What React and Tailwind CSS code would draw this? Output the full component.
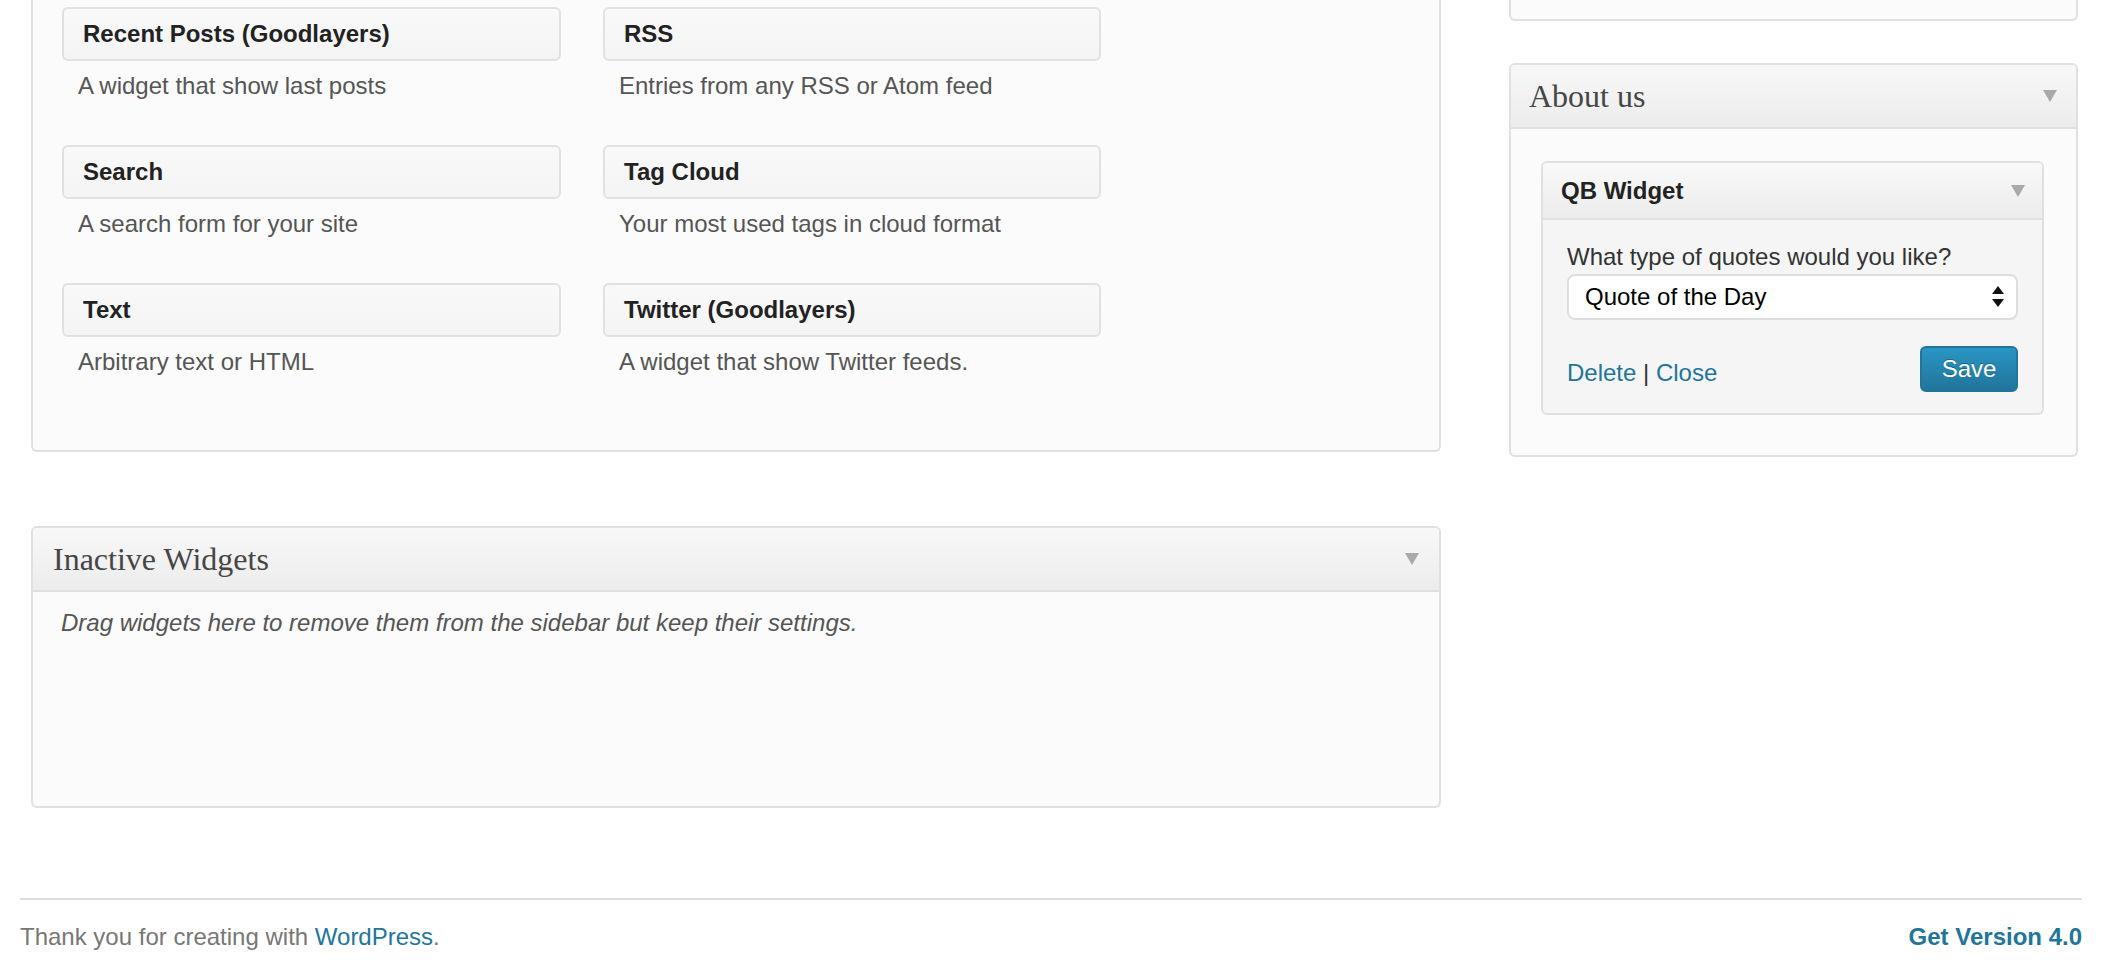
import React from 'react';

const AVAILABLE = [
  { title: 'Recent Posts (Goodlayers)', desc: 'A widget that show last posts' },
  { title: 'RSS', desc: 'Entries from any RSS or Atom feed' },
  { title: 'Search', desc: 'A search form for your site' },
  { title: 'Tag Cloud', desc: 'Your most used tags in cloud format' },
  { title: 'Text', desc: 'Arbitrary text or HTML' },
  { title: 'Twitter (Goodlayers)', desc: 'A widget that show Twitter feeds.' },
];

const DownArrow = () => (
  <svg width="14" height="12" viewBox="0 0 14 12" className="shrink-0">
    <polygon points="0,0 14,0 7,12" fill="#a9a9a9" />
  </svg>
);

const SelectArrows = () => (
  <svg width="12" height="22" viewBox="0 0 12 22" className="shrink-0">
    <polygon points="6,0 12,8 0,8" fill="#111" />
    <polygon points="0,13 12,13 6,21" fill="#111" />
  </svg>
);

const App = () => {
  return (
    <div className="min-h-screen bg-white font-['Liberation_Sans',Arial,sans-serif] text-[24px]">
      <div className="flex pl-[31px] gap-[68px]">
        {/* Left column */}
        <div className="w-[1410px] flex flex-col gap-[74px]">
          {/* Available widgets */}
          <div className="border-2 border-t-0 border-[#e0e0e0] rounded-b-[6px] bg-[#fbfbfb] pt-[7px] pb-[73px] pl-[29px]">
            <div className="grid grid-cols-[499px_498px] gap-x-[42px] gap-y-[44px]">
              {AVAILABLE.map((w) => (
                <div key={w.title}>
                  <div className="h-[54px] flex items-center pl-[19px] border-2 border-[#e1e1e1] rounded-[6px] bg-gradient-to-b from-[#f9f9f9] to-[#f4f4f4] font-bold text-[#222] leading-[30px]">
                    {w.title}
                  </div>
                  <p className="mt-[10px] pl-[16px] leading-[30px] text-[#555]">{w.desc}</p>
                </div>
              ))}
            </div>
          </div>

          {/* Inactive widgets */}
          <div className="h-[282px] border-2 border-[#e0e0e0] rounded-[6px] bg-[#fbfbfb] overflow-hidden">
            <div className="h-[64px] flex items-center justify-between pl-[20px] pr-[20px] border-b-2 border-[#e0e0e0] bg-gradient-to-b from-[#f8f8f8] to-[#ececec]">
              <h3 className="font-['Liberation_Serif',Georgia,serif] text-[32px] leading-none text-[#464646]">Inactive Widgets</h3>
              <DownArrow />
            </div>
            <p className="pt-[16px] pl-[28px] italic leading-[30px] text-[#555]">
              Drag widgets here to remove them from the sidebar but keep their settings.
            </p>
          </div>
        </div>

        {/* Right column */}
        <div className="w-[569px] flex flex-col gap-[42px]">
          <div className="h-[21px] border-2 border-t-0 border-[#e0e0e0] rounded-b-[6px] bg-[#fbfbfb]" />

          <div className="border-2 border-[#e0e0e0] rounded-[6px] bg-[#fbfbfb] overflow-hidden">
            <div className="h-[64px] flex items-center justify-between pl-[18px] pr-[19px] border-b-2 border-[#e0e0e0] bg-gradient-to-b from-[#f8f8f8] to-[#ececec]">
              <h3 className="font-['Liberation_Serif',Georgia,serif] text-[32px] leading-none text-[#464646]">About us</h3>
              <DownArrow />
            </div>

            <div className="ml-[30px] mr-[32px] mt-[32px] mb-[40px] border-2 border-[#e0e0e0] rounded-[6px] bg-[#f5f5f5] overflow-hidden">
              <div className="h-[57px] flex items-center justify-between pl-[18px] pr-[17px] border-b-2 border-[#e0e0e0] bg-gradient-to-b from-[#f9f9f9] to-[#ececec]">
                <span className="font-bold text-[#222]">QB Widget</span>
                <DownArrow />
              </div>
              <div className="px-[24px] pt-[22px] pb-[21px]">
                <label className="block leading-[30px] text-[#333]">What type of quotes would you like?</label>
                <div className="mt-[2px] h-[46px] flex items-center justify-between pl-[16px] pr-[12px] border-2 border-[#dedede] rounded-[8px] bg-white text-black">
                  <span>Quote of the Day</span>
                  <SelectArrows />
                </div>
                <div className="mt-[26px] flex items-end justify-between">
                  <div className="leading-[30px] mb-[4px]">
                    <span className="text-[#21759b]">Delete</span>
                    <span className="text-[#333]"> | </span>
                    <span className="text-[#21759b]">Close</span>
                  </div>
                  <button className="w-[98px] h-[46px] rounded-[6px] border-2 border-[#21759b] bg-gradient-to-b from-[#2a95c5] to-[#21759b] text-white [text-shadow:0_-1px_0_rgba(0,0,0,0.3)]">
                    Save
                  </button>
                </div>
              </div>
            </div>
          </div>
        </div>
      </div>

      {/* Footer */}
      <footer className="mt-[90px] ml-[20px] w-[2062px] border-t-2 border-[#dedede] pt-[22px] flex justify-between leading-[30px]">
        <p className="text-[#777]">
          Thank you for creating with <span className="text-[#21759b]">WordPress</span>.
        </p>
        <p className="font-bold text-[#21759b]">Get Version 4.0</p>
      </footer>
    </div>
  );
};

export default App;
